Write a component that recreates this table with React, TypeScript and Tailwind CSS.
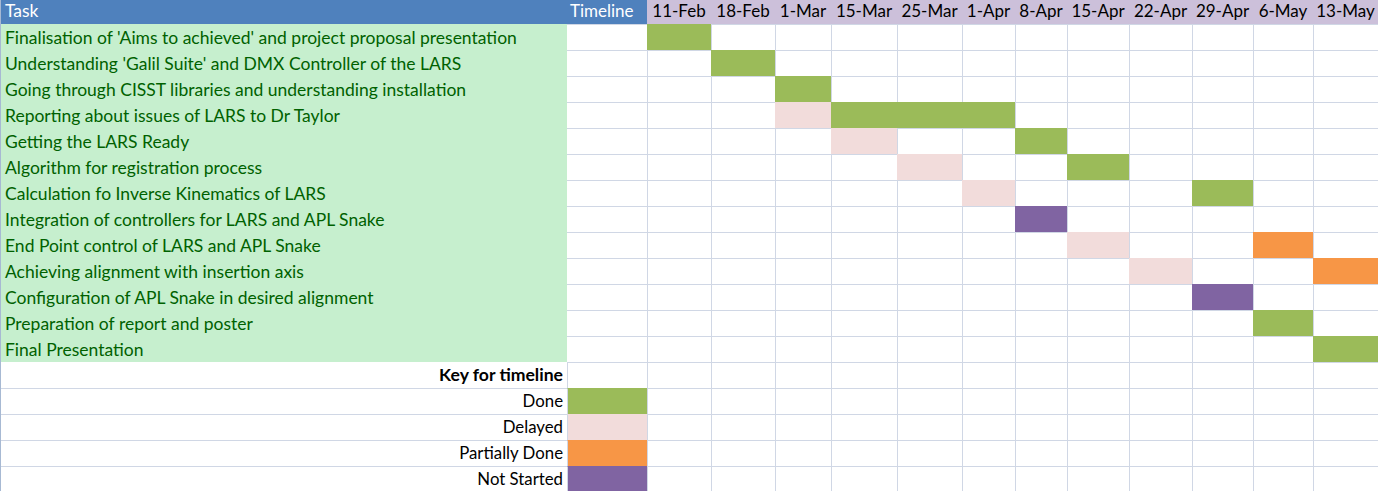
import React from "react";

type Fill = "done" | "delayed" | "partial" | "not" | null;

const dateCols = [
  { label: "11-Feb", w: "w-[64px]" },
  { label: "18-Feb", w: "w-[64px]" },
  { label: "1-Mar", w: "w-[56px]" },
  { label: "15-Mar", w: "w-[66px]" },
  { label: "25-Mar", w: "w-[65px]" },
  { label: "1-Apr", w: "w-[53px]" },
  { label: "8-Apr", w: "w-[52px]" },
  { label: "15-Apr", w: "w-[62px]" },
  { label: "22-Apr", w: "w-[63px]" },
  { label: "29-Apr", w: "w-[61px]" },
  { label: "6-May", w: "w-[60px]" },
  { label: "13-May", w: "w-[65px]" },
];

const fillClass: Record<string, string> = {
  done: "bg-[#9BBB59] border-[#9BBB59]",
  delayed: "bg-[#F2DCDB] border-[#F2DCDB]",
  partial: "bg-[#F79646] border-[#F79646]",
  not: "bg-[#8064A2] border-[#8064A2]",
};

const keyFillClass: Record<string, string> = {
  done: "bg-[#9BBB59] border-t-[#9BBB59]",
  delayed: "bg-[#F2DCDB] border-t-[#F2DCDB]",
  partial: "bg-[#F79646] border-t-[#F79646]",
  not: "bg-[#8064A2] border-t-[#8064A2]",
};

const tasks: { name: string; cells: Record<number, Fill> }[] = [
  { name: "Finalisation of 'Aims to achieved' and project proposal presentation", cells: { 0: "done" } },
  { name: "Understanding 'Galil Suite' and DMX Controller of the LARS", cells: { 1: "done" } },
  { name: "Going through CISST libraries and understanding installation", cells: { 2: "done" } },
  { name: "Reporting about issues of LARS to Dr Taylor", cells: { 2: "delayed", 3: "done", 4: "done", 5: "done" } },
  { name: "Getting the LARS Ready", cells: { 3: "delayed", 6: "done" } },
  { name: "Algorithm for registration process", cells: { 4: "delayed", 7: "done" } },
  { name: "Calculation fo Inverse Kinematics of LARS", cells: { 5: "delayed", 9: "done" } },
  { name: "Integration of controllers for LARS and APL Snake", cells: { 6: "not" } },
  { name: "End Point control of LARS and APL Snake", cells: { 7: "delayed", 10: "partial" } },
  { name: "Achieving alignment with insertion axis", cells: { 8: "delayed", 11: "partial" } },
  { name: "Configuration of APL Snake in desired alignment", cells: { 9: "not" } },
  { name: "Preparation of report and poster", cells: { 10: "done" } },
  { name: "Final Presentation", cells: { 11: "done" } },
];

const keys: { label: string; fill: Fill }[] = [
  { label: "Done", fill: "done" },
  { label: "Delayed", fill: "delayed" },
  { label: "Partially Done", fill: "partial" },
  { label: "Not Started", fill: "not" },
];

function DateCells({ cells }: { cells: Record<number, Fill> }) {
  return (
    <>
      {dateCols.map((c, i) => {
        const f = cells[i];
        return (
          <div
            key={i}
            className={`${c.w} shrink-0 h-full border-l border-t ${f ? fillClass[f] : "bg-white border-[#D0D7E5]"}`}
          />
        );
      })}
    </>
  );
}

export default function App() {
  return (
    <div
      className="w-[1378px] h-[491px] overflow-hidden bg-white border-l border-[#A7B9D3] text-black"
      style={{ fontFamily: "Lato, 'Open Sans', sans-serif" }}
    >
      {/* Header */}
      <div className="flex h-[24px] text-[17px]">
        <div className="w-[566px] shrink-0 bg-[#4F81BD] text-white text-[17.5px] flex items-end pl-[4px] pb-[3px] leading-[20px]">Task</div>
        <div className="w-[80px] shrink-0 bg-[#4F81BD] text-white flex items-end pl-[3px] pb-[3px] leading-[20px]">Timeline</div>
        {dateCols.map((c) => (
          <div key={c.label} className={`${c.w} shrink-0 bg-[#CCC0DA] flex items-end justify-center pb-[3px] leading-[20px] whitespace-nowrap`}>
            {c.label}
          </div>
        ))}
      </div>
      {/* Tasks */}
      {tasks.map((t) => (
        <div key={t.name} className="flex h-[26px]">
          <div className="w-[566px] shrink-0 bg-[#C6EFCE] text-[#006100] text-[17.5px] flex items-end pl-[4px] pb-[2px] leading-[20px] whitespace-nowrap">
            {t.name}
          </div>
          <div className="w-[80px] shrink-0 h-full border-t border-[#D0D7E5] bg-white" />
          <DateCells cells={t.cells} />
        </div>
      ))}
      {/* Key header */}
      <div className="flex h-[26px]">
        <div className="w-[566px] shrink-0 flex items-end justify-end pr-[4px] pb-[3px] leading-[20px] whitespace-nowrap text-[17.6px] font-bold">
          Key for timeline
        </div>
        <div className="w-[80px] shrink-0 h-full border-l border-t border-[#D0D7E5] bg-white" />
        <DateCells cells={{}} />
      </div>
      {/* Key rows */}
      {keys.map((k) => (
        <div key={k.label} className="flex h-[26px]">
          <div className="w-[566px] shrink-0 flex items-end justify-end pr-[4px] pb-[3px] leading-[20px] whitespace-nowrap text-[16.8px] border-t border-[#D0D7E5]">
            {k.label}
          </div>
          <div
            className={`w-[80px] shrink-0 h-full border-l border-t border-l-[#D0D7E5] ${k.fill ? keyFillClass[k.fill] : "bg-white border-t-[#D0D7E5]"}`}
          />
          <DateCells cells={{}} />
        </div>
      ))}
    </div>
  );
}
